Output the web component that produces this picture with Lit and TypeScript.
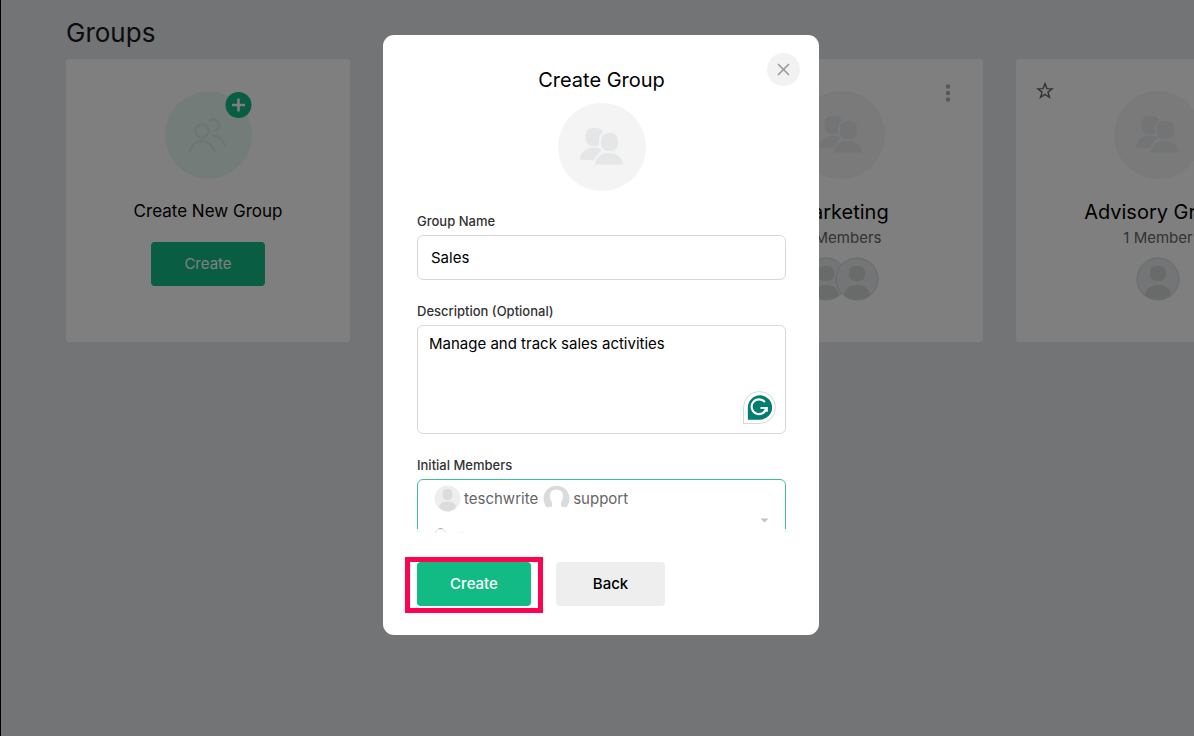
import { LitElement, html, css, nothing } from "lit";
import { customElement, property } from "lit/decorators.js";

const font = css`"Inter", "Noto Sans", sans-serif`;

const peopleIcon = html`<svg class="people" viewBox="0 0 44 38" aria-hidden="true">
  <rect x="5.500" y="0" width="18" height="18" rx="7"></rect>
  <path d="M0 32c0-8 7-12.500 14-12.500 3 0 6 1 8 2-4 3-6 7-7 10.500z"></path>
  <rect class="halo" x="20" y="4" width="19" height="20" rx="8"></rect>
  <path class="halo" d="M14 37.500C14 29 21 24 29 24s15 5 15 13.500z"></path>
</svg>`;

const avatar = html`<svg class="avatar" viewBox="0 0 44 44" aria-hidden="true">
  <circle cx="22" cy="22" r="21" fill="#e8eaed" stroke="#d0d5d3" stroke-width="1"></circle>
  <rect x="14" y="9" width="16" height="15" rx="6" fill="#d2d6d6"></rect>
  <path d="M9 38c1-7 6-10 13-10s12 3 13 10c-4 3-8 4-13 4s-9-1-13-4z" fill="#d2d6d6"></path>
</svg>`;

@customElement("group-card")
export class GroupCard extends LitElement {
  @property() name = "";
  @property({ type: Number }) members = 1;
  @property({ type: Boolean }) menu = false;

  static styles = css`
    :host {
      display: grid;
      grid-template-columns: 1fr 88px 1fr;
      grid-template-rows: 88px auto auto auto;
      justify-items: center;
      align-content: start;
      height: 283px;
      padding: 32px 20px;
      box-sizing: border-box;
      background: #fff;
      border-radius: 3px;
      font-family: ${font};
    }
    button { border: 0; padding: 0; background: none; height: 20px; line-height: 0; margin-top: -10px; }
    .star { justify-self: start; }
    .more { grid-column: 3; grid-row: 1; justify-self: end; margin: -8px 12px 0; }
    .photo {
      grid-column: 2; grid-row: 1; width: 88px; height: 88px; border-radius: 50%;
      background: #f4f4f4; display: grid; place-items: center;
    }
    .people { width: 44px; height: 38px; fill: #e6e8eb; }
    .halo { stroke: #f4f4f4; stroke-width: 2; }
    h2, p { grid-column: 1 / -1; margin: 0; font-weight: 400; color: #000; white-space: nowrap; }
    h2 { font-size: 20px; line-height: 28px; margin-top: 19px; }
    p { font-size: 15px; line-height: 20px; color: #666; margin-top: 2px; }
    .faces { grid-column: 1 / -1; display: flex; margin-top: 9px; }
    .avatar { width: 44px; height: 44px; margin-left: -13px; }
    .avatar:first-child { margin-left: 0; }
  `;

  render() {
    return html`
      <button class="star" aria-label="Favourite">
        <svg width="18" height="20" viewBox="0 0 18 20" fill="none" stroke="#666" stroke-width="1.4">
          <path d="M9 2.6 10.9 7.6 16.2 7.8 12 11.1 13.5 16.3 9 13.3 4.5 16.3 6 11.1 1.8 7.8 7.1 7.6Z"></path>
        </svg>
      </button>
      <div class="photo">${peopleIcon}</div>
      ${this.menu
        ? html`<button class="more" aria-label="More options">
            <svg width="6" height="20" viewBox="0 0 6 20" fill="#b0b0b0">
              <circle cx="3" cy="3.500" r="2.2"></circle><circle cx="3" cy="10" r="2.2"></circle><circle cx="3" cy="16.500" r="2.2"></circle>
            </svg>
          </button>`
        : nothing}
      <h2>${this.name}</h2>
      <p>${this.members} ${this.members === 1 ? "Member" : "Members"}</p>
      <div class="faces">${Array.from({ length: this.members }, () => avatar)}</div>
    `;
  }
}

@customElement("create-group-dialog")
export class CreateGroupDialog extends LitElement {
  static styles = css`
    :host {
      position: relative;
      display: flex;
      flex-direction: column;
      width: 436px;
      height: 600px;
      box-sizing: border-box;
      background: #fff;
      border-radius: 11px;
      font-family: ${font};
      color: #000;
    }
    .close {
      position: absolute; top: 18px; right: 19px; width: 33px; height: 33px; padding: 0;
      border: 0; border-radius: 50%; background: #f2f2f2; display: grid; place-items: center;
    }
    form { flex: 1; min-height: 0; display: flex; flex-direction: column; }
    .body { position: relative; flex: 1; min-height: 0; overflow: hidden; padding: 31px 33px 0 34px; }
    .body::after {
      content: ""; position: absolute; inset: auto 0 0; height: 4px; background: rgba(255, 255, 255, .85);
    }
    h2 { margin: 0; text-align: center; font-size: 20px; line-height: 28px; font-weight: 400; }
    .photo {
      width: 88px; height: 88px; margin: 9px auto 20px; border-radius: 50%; background: #f4f4f4;
      display: grid; place-items: center;
    }
    .people { width: 44px; height: 38px; fill: #e5e6e7; }
    .halo { stroke: #f4f4f4; stroke-width: 2; }
    label, .label { display: block; font-size: 13px; line-height: 20px; font-weight: 500; color: #333; margin-bottom: 4px; }
    input, textarea {
      display: block; width: 100%; box-sizing: border-box; border: 1px solid #d8d8d8; border-radius: 6px;
      font: 15px/20px ${font}; color: #000; background: #fff; outline: 0; margin: 0;
    }
    input { height: 45px; padding: 0 13px; }
    textarea { height: 109px; padding: 8px 11px; resize: none; }
    .field { position: relative; margin-bottom: 21px; }
    .checker { position: absolute; right: 10px; bottom: 10px; }
    .picker {
      position: relative; height: 90px; border: 1px solid #3fbf94; border-radius: 6px;
      padding: 5px 16px; box-sizing: border-box; font-size: 15px; line-height: 27px; color: #666;
    }
    .row { display: flex; align-items: center; }
    .row span { margin: 0 5px 0 3px; }
    .second { display: block; margin-top: 16px; }
    .arrow { position: absolute; right: 16px; top: 38px; }
    .actions { display: flex; gap: 25px; padding: 29px 34px; }
    .actions button {
      height: 44px; border: 0; border-radius: 4px; font: 500 15px/20px ${font};
    }
    .mark { position: relative; display: flex; }
    .mark::after {
      content: ""; position: absolute; inset: -5px -12px -7px; border: 5px solid #ff0250;
    }
    .create { width: 114px; background: #12bb84; color: #fff; }
    .back { width: 109px; background: #eee; color: #000; }
  `;

  render() {
    return html`
      <form>
        <div class="body">
          <h2>Create Group</h2>
          <div class="photo">${peopleIcon}</div>
          <div class="field">
            <label for="name">Group Name</label>
            <input id="name" type="text" .value=${"Sales"} />
          </div>
          <div class="field">
            <label for="description">Description (Optional)</label>
            <textarea id="description" spellcheck="false" .value=${"Manage and track sales activities"}></textarea>
            <svg class="checker" width="33" height="33" viewBox="0 0 34 34" aria-hidden="true">
              <path d="M.5 33.500V17A16.500 16.500 0 1 1 17 33.500Z" fill="#fff" stroke="#d3d8d7"></path>
              <path d="M5 29.500V17A12.500 12.500 0 1 1 17.500 29.500Z" fill="#027e6f"></path>
              <path d="M22.500 11.500A7.600 7.600 0 1 0 24 17.500M18 17.500h6.500v4" fill="none" stroke="#fff" stroke-width="2.200"></path>
            </svg>
          </div>
          <div class="label" id="members">Initial Members</div>
          <div class="picker" role="group" aria-labelledby="members">
            <div class="row">
              <svg width="27" height="27" viewBox="0 0 27 27" aria-hidden="true">
                <circle cx="13.500" cy="13.500" r="13" fill="#eee"></circle>
                <rect x="8.500" y="4" width="10" height="11" rx="4.500" fill="#dadcdd"></rect>
                <path d="M5 22c1-4 4-5.500 8.500-5.500s7.500 1.500 8.500 5.500c-2 3-5 4.500-8.500 4.500S7 25 5 22z" fill="#dadcdd"></path>
              </svg>
              <span>teschwrite</span>
              <svg width="27" height="27" viewBox="0 0 27 27" aria-hidden="true">
                <path d="M4 22.500A13 13 0 1 1 23 22.500L18 21.500 18 17.500C22 11 20 4.500 13.500 4.500S5 11 9 17.500L9 21.500Z" fill="#d9dbdd"></path>
              </svg>
              <span>support</span>
            </div>
            <svg class="second" width="60" height="12" viewBox="0 0 60 12" aria-hidden="true">
              <circle cx="6.500" cy="6.500" r="5.500" fill="none" stroke="#888" stroke-width="1.500"></circle>
              <path d="M26 5h5M65 5h2" stroke="#888"></path>
            </svg>
            <svg class="arrow" width="9" height="5" viewBox="0 0 9 5" aria-hidden="true">
              <path d="M.5.5h8l-4 4z" fill="#bfc4c4"></path>
            </svg>
          </div>
        </div>
        <div class="actions">
          <div class="mark"><button class="create" type="button">Create</button></div>
          <button class="back" type="button">Back</button>
        </div>
      </form>
      <button class="close" aria-label="Close">
        <svg width="13" height="13" viewBox="0 0 13 13" stroke="#999" stroke-width="1.600">
          <path d="M1 1l11 11M12 1L1 12"></path>
        </svg>
      </button>
    `;
  }
}

@customElement("app-root")
export class AppRoot extends LitElement {
  static styles = css`
    :host {
      display: block; position: relative; min-height: 100vh; box-sizing: border-box; overflow: hidden;
      background: #e7e9ec; border-left: 1px solid #000; font-family: ${font};
    }
    main { padding: 15px 0 0 65px; }
    h1 { margin: 0 0 8px; font-size: 26px; line-height: 36px; font-weight: 400; color: #16181b; }
    .cards { display: grid; grid-template-columns: repeat(4, 284px); justify-content: space-between; width: 1234px; }
    .new {
      display: flex; flex-direction: column; align-items: center; height: 283px; padding-top: 32px;
      box-sizing: border-box; background: #fff; border-radius: 3px;
    }
    .new p { margin: 20px 0 19px; font-size: 17px; line-height: 24px; color: #000; }
    .new button {
      width: 114px; height: 44px; border: 0; border-radius: 4px; background: #12bb84; color: #fff;
      font: 15px/20px ${font};
    }
    .third { grid-column: 3; }
    .backdrop {
      position: absolute; inset: 0; background: rgba(0, 0, 0, .5);
      display: flex; justify-content: center; align-items: flex-start; padding: 35px 0 0 7px;
    }
  `;

  render() {
    return html`
      <main>
        <h1>Groups</h1>
        <div class="cards">
          <section class="new">
            <svg width="88" height="88" viewBox="0 0 88 88" aria-hidden="true" overflow="visible">
              <circle cx="44.500" cy="44" r="43.500" fill="#e7f8f2"></circle>
              <g fill="none" stroke="#dfeae8" stroke-width="2.500">
                <circle cx="38" cy="40" r="6.500"></circle>
                <path d="M25.500 61C28 53 32 50 38 50s10 3 13 11"></path>
                <path d="M45 30c4-4 10-1 10 4 0 3-2 5-4 6M48 45c7 0 11 3 13 10"></path>
              </g>
              <circle cx="74.500" cy="14" r="13" fill="#12bb84"></circle>
              <path d="M74.500 7.500v13M68 14h13" stroke="#fff" stroke-width="2.500"></path>
            </svg>
            <p>Create New Group</p>
            <button>Create</button>
          </section>
          <group-card class="third" name="Marketing" .members=${2} menu></group-card>
          <group-card name="Advisory Group" .members=${1}></group-card>
        </div>
      </main>
      <div class="backdrop"><create-group-dialog role="dialog" aria-label="Create Group"></create-group-dialog></div>
    `;
  }
}
